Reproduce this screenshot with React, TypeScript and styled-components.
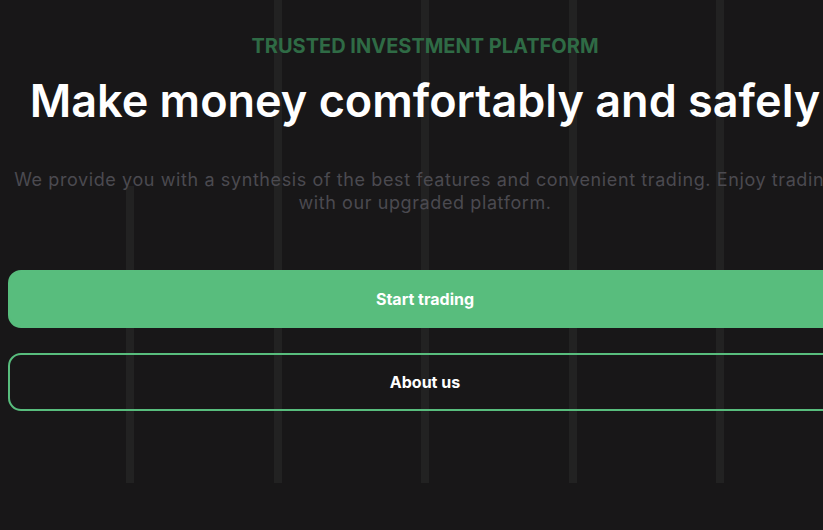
import React from 'react';
import styled, { createGlobalStyle } from 'styled-components';

const GlobalStyle = createGlobalStyle`
  html, body {
    background: #181718;
    overflow: hidden;
  }

  body {
    margin: 0 8px;
    width: 834px;
    font-family: Inter, "Noto Sans", sans-serif;
  }
`;

const HeroSection = styled.section`
  position: relative;
  width: 834px;
  height: 530px;
`;

const BarsLayer = styled.div`
  position: absolute;
  top: 0;
  left: 0;
  right: 0;
  height: 483px;
  display: flex;
  justify-content: center;
  align-items: flex-end;
  gap: 139.5px;
  z-index: 0;
`;

const Bar = styled.div<{ $height: number }>`
  flex: none;
  width: 8px;
  height: ${(p) => p.$height}px;
  background: #222222;
`;

const Content = styled.div`
  position: relative;
  z-index: 1;
  display: flex;
  flex-direction: column;
  align-items: center;
  text-align: center;
  padding-top: 33px;
`;

const Eyebrow = styled.div`
  font-size: 20px;
  font-weight: 700;
  line-height: 26px;
  color: #2f6b45;
  text-transform: uppercase;
`;

const Title = styled.h1`
  margin: 14px 0 0;
  font-size: 45px;
  font-weight: 600;
  line-height: 56px;
  color: #ffffff;
  white-space: nowrap;
`;

const Lead = styled.p`
  margin: 39px 0 0;
  font-size: 18px;
  letter-spacing: 0.6px;
  line-height: 23px;
  color: #4b4a50;
`;

const Actions = styled.div`
  width: 834px;
  display: flex;
  flex-direction: column;
  gap: 25px;
  margin-top: 56px;
`;

const Button = styled.button<{ $variant: 'solid' | 'outline' }>`
  width: 100%;
  height: 58px;
  border-radius: 13px;
  font-family: inherit;
  font-size: 16px;
  font-weight: 700;
  color: #ffffff;
  cursor: pointer;
  background: ${(p) => (p.$variant === 'solid' ? '#58bd7d' : 'transparent')};
  border: 2px solid #58bd7d;
`;

const bars = [297, 483, 483, 483, 483];

const App: React.FC = () => {
  return (
    <HeroSection>
      <GlobalStyle />
      <BarsLayer>
        {bars.map((h, i) => (
          <Bar key={i} $height={h} />
        ))}
      </BarsLayer>
      <Content>
        <Eyebrow>Trusted investment platform</Eyebrow>
        <Title>Make money comfortably and safely</Title>
        <Lead>
          We provide you with a synthesis of the best features and convenient trading. Enjoy trading
          with our upgraded platform.
        </Lead>
        <Actions>
          <Button $variant="solid">Start trading</Button>
          <Button $variant="outline">About us</Button>
        </Actions>
      </Content>
    </HeroSection>
  );
};

export default App;
